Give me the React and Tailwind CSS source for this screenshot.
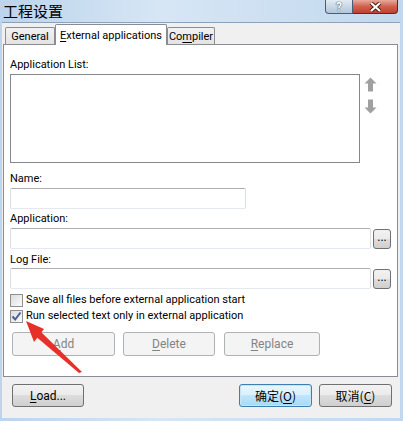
import React from 'react'

const font = { fontFamily: 'Roboto, "Noto Sans CJK SC", sans-serif' }
const cjk = { fontFamily: '"Noto Sans CJK SC", sans-serif' }

const Acc = ({ children }) => <span className="underline underline-offset-2">{children}</span>

const WinButton = ({ children, className = '', primary, disabled }) => {
  let skin = 'border-[#707070] bg-[linear-gradient(#f2f2f2_0%,#ebebeb_49%,#dddddd_50%,#cfcfcf_100%)] text-black'
  if (primary) skin = 'border-[#3c7fb1] bg-[linear-gradient(#eaf6fd_0%,#d9f0fc_49%,#bee6fd_50%,#a7d9f5_100%)] text-black shadow-[inset_0_0_0_1px_#c6e6f8]'
  if (disabled) skin = 'border-[#adb2b5] bg-[#f4f4f4] text-[#838383]'
  return (
    <div className={`flex items-center justify-center rounded-[3px] border text-[12px] ${skin} ${className}`}>
      {children}
    </div>
  )
}

const TextBox = ({ className = '' }) => (
  <div className={`h-[21px] rounded-[2px] border border-t-[#abadb3] border-x-[#dbdfe6] border-b-[#e3e9ef] bg-white ${className}`} />
)

const Browse = () => (
  <WinButton className="ml-[2px] h-[20px] w-[18px] pb-[4px] text-[11px] leading-none">...</WinButton>
)

const CheckBox = ({ checked }) => (
  <div className="flex h-[13px] w-[13px] shrink-0 items-center justify-center border border-[#8e8f8f] bg-[linear-gradient(135deg,#dcdcdc,#fbfbfb)]">
    {checked && (
      <svg width="11" height="11" viewBox="0 0 11 11">
        <path d="M1.5 5.5 L4.2 8.5 L9.5 1.5" stroke="#4a5f97" strokeWidth="2" fill="none" />
      </svg>
    )}
  </div>
)

const Arrow = ({ down }) => (
  <svg width="13" height="15" viewBox="0 0 13 15" className={down ? 'rotate-180' : ''}>
    <path d="M6.5 0.5 L12.5 6.5 L9 6.5 L9 14.5 L4 14.5 L4 6.5 L0.5 6.5 Z" fill="#a0a0a0" />
  </svg>
)

export default function App() {
  return (
    <div className="relative flex h-[421px] w-[403px] flex-col overflow-hidden bg-[linear-gradient(90deg,#bcd4ec,#d6e6f5_40%,#c2d8ee)]" style={font}>
      {/* title bar */}
      <div className="flex h-[22px] items-start justify-between pl-[3px] pr-[5px]">
        <div className="pt-[1px] text-[15px] leading-[19px] text-black" style={cjk}>工程设置</div>
        <div className="flex">
          <div className="flex h-[14px] w-[28px] items-center justify-center rounded-bl-[4px] border border-t-0 border-[#4a5d78] bg-[linear-gradient(#e3ebf3,#c9d7e6_50%,#b4c6d9)] text-[12px] font-bold leading-[12px] text-white [text-shadow:0_0_1px_#30405a,0_0_1px_#30405a]">?</div>
          <div className="flex h-[14px] w-[45px] items-center justify-center rounded-br-[4px] border border-l-0 border-t-0 border-[#5b2a22] bg-[linear-gradient(#e9a99b,#d0614f_50%,#c0402c)]">
            <svg width="13" height="10" viewBox="0 0 13 10">
              <path d="M2 1 L11 9 M11 1 L2 9" stroke="#4a1a12" strokeWidth="4" />
              <path d="M2 1 L11 9 M11 1 L2 9" stroke="#fff" strokeWidth="2.2" />
            </svg>
          </div>
        </div>
      </div>

      {/* client area */}
      <div className="ml-[2px] mr-[3px] flex flex-1 flex-col border-t border-[#8da2b8] bg-[#f0f0f0] text-[11px]">
        {/* tabs */}
        <div className="flex h-[21px] items-end pl-[3px] leading-none">
          <div className="flex h-[17px] w-[50px] items-center justify-center rounded-t-[2px] border border-b-0 border-[#898c95] bg-[linear-gradient(#f2f2f2,#e3e3e3)]">General</div>
          <div className="relative z-10 -mb-px flex h-[21px] w-[112px] items-center justify-center rounded-t-[2px] border border-b-0 border-[#898c95] bg-white">
            <span><Acc>E</Acc>xternal applications</span>
          </div>
          <div className="flex h-[17px] w-[48px] items-center justify-center rounded-t-[2px] border border-b-0 border-[#898c95] bg-[linear-gradient(#f2f2f2,#e3e3e3)]">
            <span>Co<Acc>m</Acc>piler</span>
          </div>
        </div>

        {/* tab panel */}
        <div className="ml-[1px] mr-[2px] flex h-[333px] flex-col border border-[#898c95] bg-white pl-[6px] pr-[6px] leading-[14px] text-black">
          <div className="mt-[13px] h-[14px]">Application List:</div>
          <div className="mt-[2px] flex">
            <div className="h-[89px] w-[350px] border border-[#828790]" />
            <div className="ml-[4px] flex flex-col gap-[7px] pt-[3px]">
              <Arrow />
              <Arrow down />
            </div>
          </div>

          <div className="mt-[9px] h-[14px]">Name:</div>
          <TextBox className="mt-[2px] w-[236px]" />

          <div className="mt-[3px] h-[14px]">Application:</div>
          <div className="mt-[2px] flex items-center">
            <TextBox className="w-[361px]" />
            <Browse />
          </div>

          <div className="mt-[4px] h-[14px]">Log File:</div>
          <div className="mt-[1px] flex items-center">
            <TextBox className="w-[361px]" />
            <Browse />
          </div>

          <div className="mt-[3px] flex h-[16px] items-center gap-[3px]">
            <CheckBox />
            <span>Save all files before external application start</span>
          </div>
          <div className="flex h-[16px] items-center gap-[3px]">
            <CheckBox checked />
            <span>Run selected text only in external application</span>
          </div>

          <div className="mt-[8px] flex pl-[2px]">
            <WinButton disabled className="h-[24px] w-[103px] text-[11px]"><span><Acc>A</Acc>dd</span></WinButton>
            <WinButton disabled className="ml-[8px] h-[24px] w-[92px] text-[11px]"><span><Acc>D</Acc>elete</span></WinButton>
            <WinButton disabled className="ml-[9px] h-[24px] w-[96px] text-[11px]"><span><Acc>R</Acc>eplace</span></WinButton>
          </div>
        </div>

        {/* bottom buttons */}
        <div className="flex items-start pl-[10px] pr-[8px] pt-[7px]">
          <WinButton className="h-[23px] w-[72px] text-[11px]"><span><Acc>L</Acc>oad...</span></WinButton>
          <div className="flex-1" />
          <WinButton primary className="h-[23px] w-[73px]"><span style={cjk}>确定(<Acc>O</Acc>)</span></WinButton>
          <WinButton className="ml-[7px] h-[23px] w-[73px]"><span style={cjk}>取消(<Acc>C</Acc>)</span></WinButton>
        </div>
      </div>
      <div className="h-[3px]" />

      {/* red annotation arrow */}
      <svg className="pointer-events-none absolute left-0 top-0" width="403" height="421">
        <path d="M39 330 L82 372 L79 373 L34 335 Z" fill="#e8302a" />
        <path d="M26 321 L44 329 L34 342 Z" fill="#e8302a" />
      </svg>
    </div>
  )
}
